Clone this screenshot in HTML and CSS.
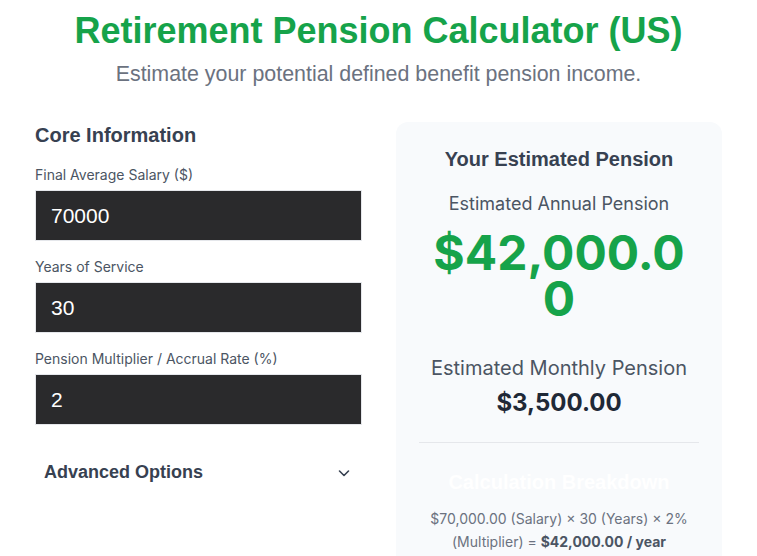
FILE: index.html
```html
<!DOCTYPE html>
<html lang="en">
<head>
    <meta charset="UTF-8">
    <meta name="viewport" content="width=device-width, initial-scale=1.0">
    <title>Retirement Pension Calculator (US)</title>
    <link rel="stylesheet" href="styles.css">
</head>
<body>
    <div class="container">
        <h1>Retirement Pension Calculator (US)</h1>
        <p class="subtitle">Estimate your potential defined benefit pension income.</p>

        <div class="layout">
            <!-- Inputs -->
            <div class="inputs">
                <h2>Core Information</h2>

                <div class="field">
                    <label for="salary">Final Average Salary ($)</label>
                    <input type="number" id="salary" value="70000">
                </div>

                <div class="field">
                    <label for="years">Years of Service</label>
                    <input type="number" id="years" value="30">
                </div>

                <div class="field">
                    <label for="multiplier">Pension Multiplier / Accrual Rate (%)</label>
                    <input type="number" id="multiplier" value="2">
                </div>

                <div class="advanced">
                    <span>Advanced Options</span>
                    <svg width="16" height="16" viewBox="0 0 16 16" fill="none" stroke="#374151" stroke-width="1.6" stroke-linecap="round" stroke-linejoin="round">
                        <path d="M3.5 6 L8 10.5 L12.5 6"/>
                    </svg>
                </div>
            </div>

            <!-- Results -->
            <div class="results">
                <h3>Your Estimated Pension</h3>
                <div class="result-label">Estimated Annual Pension</div>
                <div class="result-big">$42,000.00</div>

                <div class="result-label monthly">Estimated Monthly Pension</div>
                <div class="result-medium">$3,500.00</div>

                <hr>

                <h3 class="breakdown-title">Calculation Breakdown</h3>
                <p class="breakdown">$70,000.00 (Salary) × 30 (Years) × 2% (Multiplier) = <strong>$42,000.00 / year</strong></p>
            </div>
        </div>
    </div>
</body>
</html>
```

FILE: styles.css
```css
body {
    margin: 0;
    font-family: Inter, "Noto Sans", sans-serif;
    background-color: #ffffff;
    color: #374151;
}
.container {
    max-width: 687px;
    margin: 0 auto;
    padding: 0 35px;
}
h1 {
    font-family: "Liberation Sans", Arial, sans-serif;
    font-size: 36px;
    font-weight: bold;
    color: #16a34a;
    text-align: center;
    margin: 10px 0 0;
}
.subtitle {
    font-family: "Liberation Sans", Arial, sans-serif;
    font-size: 21.4px;
    color: #6b7280;
    text-align: center;
    margin: 10px 0 0;
}
.layout {
    display: grid;
    grid-template-columns: 327px 326px;
    column-gap: 34px;
    margin-top: 35px;
    align-items: start;
}
h2, h3 {
    font-family: "Liberation Sans", Arial, sans-serif;
    font-size: 20px;
    font-weight: bold;
    color: #374151;
    margin: 0;
}
.inputs {
    padding-top: 2px;
}
.inputs h2 {
    margin-bottom: 19px;
}
.field {
    margin-bottom: 17px;
}
.field label {
    display: block;
    font-size: 14px;
    color: #4b5563;
    margin-bottom: 7px;
}
.field input {
    display: block;
    box-sizing: border-box;
    width: 100%;
    height: 51px;
    padding: 0 15px;
    background-color: #2a2a2c;
    border: 1px solid #e5e7eb;
    border-radius: 0;
    color: #ffffff;
    font-family: "Liberation Sans", Arial, sans-serif;
    font-size: 21px;
    outline: none;
}
.advanced {
    display: flex;
    justify-content: space-between;
    align-items: center;
    padding: 20px 10px 20px 9px;
    font-family: "Liberation Sans", Arial, sans-serif;
    font-size: 18px;
    font-weight: bold;
    color: #374151;
}
.results {
    background-color: #f8fafc;
    border-radius: 12px;
    padding: 26px 23px 24px;
    text-align: center;
    min-height: 500px;
}
.result-label {
    font-size: 18px;
    color: #4b5563;
    margin-top: 22px;
}
.result-big {
    font-size: 48px;
    font-weight: bold;
    color: #16a34a;
    line-height: 46px;
    overflow-wrap: anywhere;
    margin-top: 16px;
}
.result-label.monthly {
    font-size: 20px;
    margin-top: 34px;
}
.result-medium {
    font-size: 24px;
    font-weight: bold;
    color: #1f2937;
    margin-top: 8px;
}
hr {
    border: none;
    border-top: 1px solid #e5e7eb;
    margin: 25px 0 28px;
}
.breakdown-title {
    color: #ffffff;
}
.breakdown {
    font-size: 14px;
    line-height: 23px;
    color: #6b7280;
    margin: 13px 0 0;
}
.breakdown strong {
    color: #4b5563;
}
```
